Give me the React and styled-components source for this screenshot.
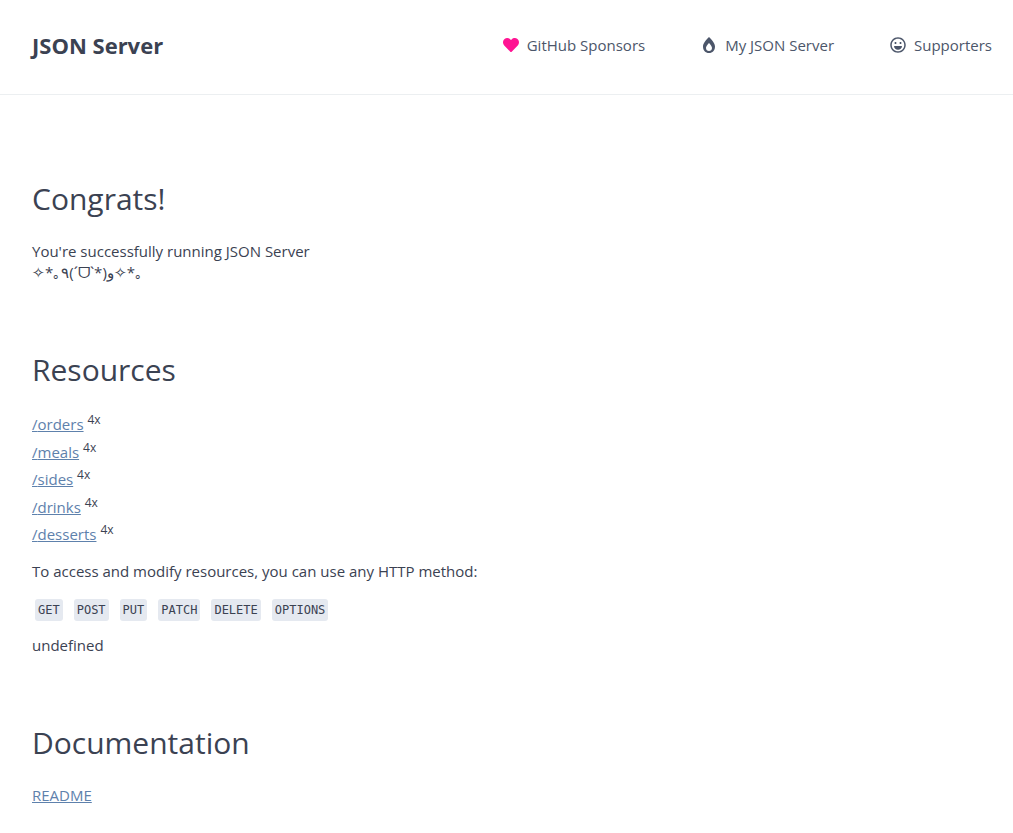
import React from 'react';
import styled, { createGlobalStyle } from 'styled-components';
import { FaHeart, FaBurn, FaRegLaugh } from 'react-icons/fa';

const GlobalStyle = createGlobalStyle`
  * { box-sizing: border-box; }
  body {
    margin: 0;
    background: #ffffff;
    color: #3b4252;
    font-family: 'Open Sans', 'Noto Sans', sans-serif;
    font-size: 15px;
    line-height: 21px;
  }
`;

const Header = styled.header`
  border-bottom: 1px solid #eceff1;
`;

const Nav = styled.nav`
  display: flex;
  align-items: center;
  justify-content: space-between;
  padding: 30px 21px 34px 32px;
`;

const Brand = styled.strong`
  font-size: 22px;
  line-height: 30px;
  font-weight: 700;
`;

const NavList = styled.ul`
  display: flex;
  gap: 56px;
  margin: 0;
  padding: 0;
  list-style: none;
`;

const NavLink = styled.a`
  display: flex;
  align-items: center;
  gap: 8px;
  color: #4c566a;
  text-decoration: none;

  svg {
    width: auto;
    height: 16px;
    color: ${({ $iconColor }) => $iconColor || 'inherit'};
  }
`;

const Main = styled.main`
  padding: 80px 32px 8px;
`;

const Section = styled.section`
  margin-bottom: 63px;

  &:last-child {
    margin-bottom: 0;
  }
`;

const Title = styled.h1`
  margin: 0 0 18px;
  font-size: 30px;
  line-height: 48px;
  font-weight: 400;
`;

const Paragraph = styled.p`
  margin: 0 0 17px;
`;

const Link = styled.a`
  color: #5e81ac;
  text-decoration: underline;
`;

const ResourceList = styled.ul`
  margin: -1px 0 12px;
  padding: 0;
  list-style: none;
`;

const Resource = styled.li`
  line-height: 27px;

  &:nth-child(odd) {
    padding-bottom: 1px;
  }

  sup {
    font-size: 12px;
    line-height: 0;
  }
`;

const Methods = styled.div`
  display: flex;
  gap: 11px;
  margin: 0 3px 14px;
`;

const Method = styled.code`
  padding: 0 3px;
  border-radius: 3px;
  background: #e5e9f0;
  font-family: 'DejaVu Sans Mono', monospace;
  font-size: 12px;
  line-height: 22px;
`;

const links = [
  { label: 'GitHub Sponsors', Icon: FaHeart, color: '#ff1493' },
  { label: 'My JSON Server', Icon: FaBurn },
  { label: 'Supporters', Icon: FaRegLaugh },
];
const resources = ['orders', 'meals', 'sides', 'drinks', 'desserts'];
const methods = ['GET', 'POST', 'PUT', 'PATCH', 'DELETE', 'OPTIONS'];

export default function App() {
  return (
    <>
      <GlobalStyle />
      <Header>
        <Nav>
          <Brand>JSON Server</Brand>
          <NavList>
            {links.map(({ label, Icon, color }) => (
              <li key={label}>
                <NavLink href="#" $iconColor={color}>
                  <Icon aria-hidden="true" />
                  {label}
                </NavLink>
              </li>
            ))}
          </NavList>
        </Nav>
      </Header>
      <Main>
        <Section>
          <Title>Congrats!</Title>
          <Paragraph>
            You're successfully running JSON Server
            <br />
            ✧*｡٩(ˊᗜˋ*)و✧*｡
          </Paragraph>
        </Section>
        <Section>
          <Title>Resources</Title>
          <ResourceList>
            {resources.map((name) => (
              <Resource key={name}>
                <Link href={`#${name}`}>/{name}</Link> <sup>4x</sup>
              </Resource>
            ))}
          </ResourceList>
          <Paragraph>To access and modify resources, you can use any HTTP method:</Paragraph>
          <Methods>
            {methods.map((method) => (
              <Method key={method}>{method}</Method>
            ))}
          </Methods>
          <Paragraph>undefined</Paragraph>
        </Section>
        <Section>
          <Title>Documentation</Title>
          <Paragraph>
            <Link href="#readme">README</Link>
          </Paragraph>
        </Section>
      </Main>
    </>
  );
}
